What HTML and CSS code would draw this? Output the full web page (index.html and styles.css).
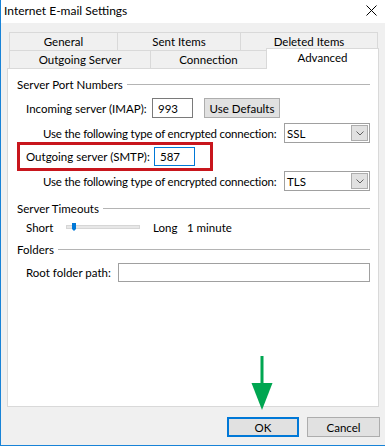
FILE: index.html
```html
<!DOCTYPE html>
<html lang="en">
<head>
    <meta charset="UTF-8">
    <title>Internet E-mail Settings</title>
    <link rel="stylesheet" href="styles.css">
</head>
<body>
<div class="window">
    <div class="titlebar">
        <span class="title">Internet E-mail Settings</span>
        <svg class="close" width="11" height="11" viewBox="0 0 11 11">
            <path d="M0.5 0.5 L10.5 10.5 M10.5 0.5 L0.5 10.5" stroke="#000" stroke-width="1" fill="none"/>
        </svg>
    </div>

    <div class="content">
        <div class="tabs">
            <div class="tab-row">
                <div class="tab t-general">General</div>
                <div class="tab t-sent">Sent Items</div>
                <div class="tab t-deleted last">Deleted Items</div>
            </div>
            <div class="tab-row">
                <div class="tab t-outgoing">Outgoing Server</div>
                <div class="tab t-connection">Connection</div>
                <div class="tab t-advanced active">Advanced</div>
            </div>
        </div>

        <div class="panel">
            <div class="group">
                <span>Server Port Numbers</span>
                <span class="rule"></span>
            </div>
            <div class="row row-imap">
                <span class="label l-imap">Incoming server (IMAP):</span>
                <div class="input port">993</div>
                <div class="button defaults">Use Defaults</div>
            </div>
            <div class="row row-enc">
                <span class="label l-enc">Use the following type of encrypted connection:</span>
                <div class="select">
                    <span>SSL</span>
                    <span class="drop"><svg width="8" height="5" viewBox="0 0 8 5"><path d="M0.5 0.5 L4 4 L7.5 0.5" stroke="#606060" fill="none"/></svg></span>
                </div>
            </div>
            <div class="highlight">
                <span class="label l-smtp">Outgoing server (SMTP):</span>
                <div class="input port focus">587</div>
            </div>
            <div class="row row-enc2">
                <span class="label l-enc">Use the following type of encrypted connection:</span>
                <div class="select">
                    <span>TLS</span>
                    <span class="drop"><svg width="8" height="5" viewBox="0 0 8 5"><path d="M0.5 0.5 L4 4 L7.5 0.5" stroke="#606060" fill="none"/></svg></span>
                </div>
            </div>

            <div class="group g-timeouts">
                <span>Server Timeouts</span>
                <span class="rule"></span>
            </div>
            <div class="row row-slider">
                <span class="label l-short">Short</span>
                <div class="track"><span class="thumb"></span></div>
                <span class="l-long">Long</span>
                <span>1 minute</span>
            </div>

            <div class="group g-folders">
                <span>Folders</span>
                <span class="rule"></span>
            </div>
            <div class="row row-root">
                <span class="label l-root">Root folder path:</span>
                <div class="input path"></div>
            </div>
        </div>

        <div class="buttons">
            <div class="button ok">OK</div>
            <div class="button cancel">Cancel</div>
        </div>
    </div>

    <svg class="arrow" width="22" height="55" viewBox="0 0 22 55">
        <rect x="9.5" y="0" width="3" height="29" fill="#00a651"/>
        <polygon points="0.5,27 21.5,27 11,54" fill="#00a651"/>
    </svg>
</div>
</body>
</html>
```

FILE: styles.css
```css
html, body {
    margin: 0;
    padding: 0;
}
body {
    font-family: Lato, "Noto Sans", sans-serif;
    font-size: 11.5px;
    color: #000;
    background: #f0f0f0;
    white-space: nowrap;
}
.window {
    position: relative;
    width: 384px;
    height: 445px;
    border-left: 1px solid #1883d7;
    border-bottom: 1px solid #1883d7;
    background: #f0f0f0;
    overflow: hidden;
}
.titlebar {
    height: 23px;
    background: #fff;
    display: flex;
    align-items: center;
    justify-content: space-between;
    padding: 0 8px 0 3px;
    font-size: 12px;
}
.title {
    margin-top: -2px;
}
.close {
    margin-top: -2px;
}

/* Tabs */
.content {
    padding-left: 6px;
}
.tabs {
    padding: 9px 0 0 2px;
}
.tab-row {
    display: flex;
    height: 18px;
}
.tab {
    box-sizing: border-box;
    height: 18px;
    border-top: 1px solid #d9d9d9;
    border-left: 1px solid #d9d9d9;
    display: flex;
    align-items: center;
    justify-content: center;
    padding-bottom: 1px;
}
.tab.last {
    border-right: 1px solid #d9d9d9;
}
.t-general { width: 108px; }
.t-sent { width: 123px; }
.t-deleted { width: 138px; }
.t-outgoing { width: 141px; }
.t-connection { width: 116px; }
.t-advanced { width: 113px; }
.tab.active {
    position: relative;
    z-index: 1;
    height: 21px;
    margin-top: -2px;
    background: #fff;
    border-right: 1px solid #d9d9d9;
    padding-bottom: 4px;
}

/* Panel */
.panel {
    box-sizing: border-box;
    width: 372px;
    height: 339px;
    border: 1px solid #d9d9d9;
    background: #fff;
    padding: 7px 8px 0 9px;
}
.group {
    display: flex;
    align-items: center;
    height: 16px;
}
.group .rule {
    flex: 1;
    border-top: 1px solid #b4b4b4;
    margin-left: 4px;
}
.g-timeouts { margin-top: 9px; }
.g-folders { margin-top: 6px; }
.row {
    display: flex;
    align-items: center;
}
.label {
    flex: none;
}
.row-imap {
    height: 20px;
    margin-top: 6px;
    padding-left: 9px;
}
.l-imap { width: 126px; }
.row-enc, .row-enc2 {
    height: 20px;
    padding-left: 26px;
}
.row-enc { margin-top: 5px; }
.row-enc2 { margin-top: 0; }
.l-enc {
    width: 241px;
    letter-spacing: -0.2px;
}
.input {
    box-sizing: border-box;
    border: 1px solid #7a7a7a;
    background: #fff;
    display: flex;
    align-items: center;
}
.port {
    width: 41px;
    height: 20px;
    padding-left: 5px;
}
.input.focus {
    border-color: #0078d7;
    height: 19px;
}
.button {
    box-sizing: border-box;
    height: 20px;
    border: 1px solid #adadad;
    background: #e1e1e1;
    display: flex;
    align-items: center;
    justify-content: center;
}
.defaults {
    width: 76px;
    margin-left: 11px;
}
.select {
    box-sizing: border-box;
    width: 86px;
    height: 20px;
    border: 1px solid #a0a0a0;
    background: #fff;
    display: flex;
    align-items: center;
    justify-content: space-between;
    padding: 0 1px 0 2px;
}
.drop {
    box-sizing: border-box;
    width: 17px;
    height: 16px;
    border: 1px solid #adadad;
    background: #e1e1e1;
    display: flex;
    align-items: center;
    justify-content: center;
}
.highlight {
    box-sizing: border-box;
    width: 196px;
    height: 29px;
    margin-top: -1px;
    border: 3px solid #c8161d;
    display: flex;
    align-items: center;
    padding-left: 6px;
}
.l-smtp { width: 128px; }

/* Slider */
.row-slider {
    height: 16px;
    margin-top: 3px;
    padding-left: 9px;
}
.l-short { width: 40px; }
.track {
    position: relative;
    box-sizing: border-box;
    width: 74px;
    height: 4px;
    background: #e7e7e7;
    border: 1px solid #d6d6d6;
}
.thumb {
    position: absolute;
    left: 5px;
    top: -3px;
    width: 4px;
    height: 6px;
    background: #0078d7;
}
.thumb::after {
    content: "";
    position: absolute;
    left: 0;
    top: 6px;
    border-left: 2px solid transparent;
    border-right: 2px solid transparent;
    border-top: 2px solid #0078d7;
}
.l-long {
    width: 34px;
    margin-left: 13px;
}

.row-root {
    height: 19px;
    margin-top: 6px;
    padding-left: 9px;
}
.l-root { width: 92px; }
.path {
    width: 253px;
    height: 19px;
    border-color: #a0a0a0;
}

/* Bottom buttons */
.buttons {
    display: flex;
    justify-content: flex-end;
    gap: 8px;
    margin-top: 10px;
    padding-right: 5px;
}
.ok {
    width: 72px;
    border: 2px solid #0078d7;
}
.cancel {
    width: 73px;
}

.arrow {
    position: absolute;
    left: 250px;
    top: 356px;
}
```
